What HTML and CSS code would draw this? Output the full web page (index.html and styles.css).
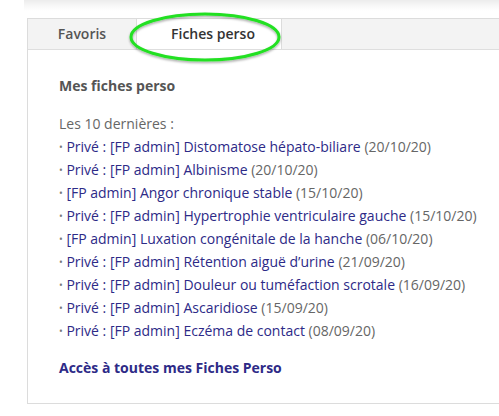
FILE: index.html
```
<!DOCTYPE html>
<html lang="fr">
<head>
<meta charset="utf-8">
<link rel="stylesheet" href="styles.css">
</head>
<body>
<div class="topshade"></div>
<div class="panel">
  <div class="tabs">
    <div class="tab">Favoris</div>
    <div class="tab active">Fiches perso</div>
  </div>
  <div class="content">
    <div class="heading">Mes fiches perso</div>
    <div class="intro">Les 10 dernières :</div>
    <ul class="list">
      <li><span class="dot">•</span> <a>Privé : [FP admin] Distomatose hépato-biliare</a> <span class="date">(20/10/20)</span></li>
      <li><span class="dot">•</span> <a>Privé : [FP admin] Albinisme</a> <span class="date">(20/10/20)</span></li>
      <li><span class="dot">•</span> <a>[FP admin] Angor chronique stable</a> <span class="date">(15/10/20)</span></li>
      <li><span class="dot">•</span> <a>Privé : [FP admin] Hypertrophie ventriculaire gauche</a> <span class="date">(15/10/20)</span></li>
      <li><span class="dot">•</span> <a>[FP admin] Luxation congénitale de la hanche</a> <span class="date">(06/10/20)</span></li>
      <li><span class="dot">•</span> <a>Privé : [FP admin] Rétention aiguë d’urine</a> <span class="date">(21/09/20)</span></li>
      <li><span class="dot">•</span> <a>Privé : [FP admin] Douleur ou tuméfaction scrotale</a> <span class="date">(16/09/20)</span></li>
      <li><span class="dot">•</span> <a>Privé : [FP admin] Ascaridiose</a> <span class="date">(15/09/20)</span></li>
      <li><span class="dot">•</span> <a>Privé : [FP admin] Eczéma de contact</a> <span class="date">(08/09/20)</span></li>
    </ul>
    <a class="all">Accès à toutes mes Fiches Perso</a>
  </div>
</div>
<svg class="circle" width="170" height="64" viewBox="0 0 170 64">
  <defs>
    <filter id="sh" x="-10%" y="-20%" width="120%" height="140%">
      <feDropShadow dx="0" dy="1.5" stdDeviation="1.2" flood-color="#000" flood-opacity="0.35"/>
    </filter>
  </defs>
  <ellipse cx="85" cy="31" rx="74" ry="23" fill="none" stroke="#22e022" stroke-width="3" filter="url(#sh)"/>
</svg>
</body>
</html>
```
FILE: styles.css
```
* { box-sizing: border-box; }
html, body { margin: 0; padding: 0; background: #fff; }
body {
  font-family: "Open Sans", "Noto Sans", "Liberation Sans", sans-serif;
  font-size: 14px;
  color: #666;
  width: 499px;
  height: 416px;
  overflow: hidden;
  position: relative;
}
.topshade {
  height: 11px;
  margin-left: 24px;
  background: linear-gradient(to bottom, #ececec 0%, #f7f7f7 50%, #fff 100%);
}
.panel {
  margin-top: 7px;
  margin-left: 27px;
  width: 472px;
  border: 1px solid #dcdcdc;
  border-right: none;
}
.tabs {
  display: flex;
  height: 31px;
  background: #f3f3f3;
  border-bottom: 1px solid #dedede;
}
.tab {
  display: flex;
  align-items: center;
  justify-content: center;
  font-weight: 600;
  color: #555;
  font-size: 14px;
  border-right: 1px solid #dcdcdc;
  width: 109px;
  padding-bottom: 2px;
}
.tab.active {
  width: 145px;
  background: #fff;
  color: #333;
  padding-left: 8px;
}
.content {
  padding: 24px 0 24px 31px;
  line-height: 23px;
}
.heading {
  font-weight: 700;
  color: #555;
}
.intro {
  margin-top: 15px;
}
.list {
  list-style: none;
  margin: 0;
  padding: 0;
}
.list li { height: 23px; }
.list a, .all { color: #2d2a87; text-decoration: none; }
.dot {
  font-size: 10px;
  line-height: 0;
  color: #777;
  position: relative;
  top: -1px;
}
.date { color: #666; }
.all {
  display: block;
  margin-top: 14px;
  font-weight: 700;
}
.circle {
  position: absolute;
  left: 120px;
  top: 6px;
}
```
